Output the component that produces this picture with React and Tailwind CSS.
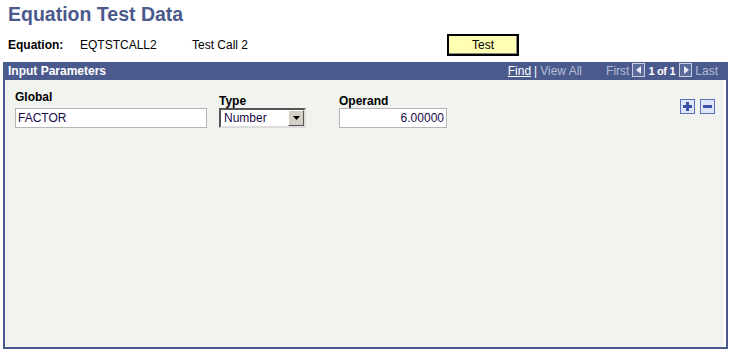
import React from "react";

function NavArrow({ dir }) {
  return (
    <span className="inline-flex h-[14px] w-[13px] items-center justify-center border border-[#c9cfe2] bg-[#5b6a9a]">
      <svg width="8" height="10" viewBox="0 0 8 10">
        {dir === "left" ? (
          <polygon points="6,1 6,9 1,5" fill="#e8ebf4" />
        ) : (
          <polygon points="2,1 2,9 7,5" fill="#e8ebf4" />
        )}
      </svg>
    </span>
  );
}

function RowButton({ kind }) {
  return (
    <button className="flex h-[15px] w-[15px] items-center justify-center border border-[#5b6fbf] bg-[#dfe6f8]">
      <svg width="11" height="11" viewBox="0 0 11 11">
        <rect x="1" y="4" width="9" height="3" fill="#3d50a8" />
        {kind === "add" && <rect x="4" y="1" width="3" height="9" fill="#3d50a8" />}
      </svg>
    </button>
  );
}

export default function App() {
  return (
    <div className="h-[353px] w-[731px] bg-white font-['Liberation_Sans',Arial,sans-serif] text-[12px] text-black">
      <div className="h-[28px] px-[8px] pt-[3px] text-[19.5px] font-bold leading-[22px] text-[#4b5a8c]">
        Equation Test Data
      </div>

      <div className="flex h-[28px] items-end pl-[8px]">
        <span className="w-[72px] pb-[2px] font-bold">Equation:</span>
        <span className="w-[112px] pb-[2px]">EQTSTCALL2</span>
        <span className="w-[255px] pb-[2px]">Test Call 2</span>
        <button className="h-[22px] w-[72px] border-2 border-black bg-[#ffffb4] text-[12px] leading-none shadow-[inset_-1px_-1px_0_#888]">
          Test
        </button>
      </div>

      <div className="mx-[3px] mt-[6px] flex h-[287px] flex-col border-2 border-t-0 border-[#4b5a8c] bg-[#f1f3ee]">
        <div className="flex h-[18px] items-center bg-[#4b5a8c] pl-[3px] pr-[8px] text-white">
          <span className="font-bold">Input Parameters</span>
          <div className="ml-auto flex items-center">
            <span className="underline">Find</span>
            <span className="mx-[3px]">|</span>
            <span className="text-[#b4bcd6]">View All</span>
            <span className="ml-[24px] text-[#b4bcd6]">First</span>
            <span className="ml-[3px]"><NavArrow dir="left" /></span>
            <span className="ml-[3px] text-[11px] font-bold tracking-[-0.3px]">1 of 1</span>
            <span className="ml-[4px]"><NavArrow dir="right" /></span>
            <span className="ml-[3px] text-[#b4bcd6]">Last</span>
          </div>
        </div>

        <div className="flex flex-1 border-r-2 border-white pl-[10px] pr-[9px] pt-[8px]">
          <div className="flex flex-col">
            <span className="h-[20px] font-bold">Global</span>
            <div className="flex h-[20px] w-[192px] items-center border border-[#b5b5b5] bg-white px-[2px] text-[#1a0a4a]">
              FACTOR
            </div>
          </div>
          <div className="ml-[12px] flex flex-col pt-[4px]">
            <span className="h-[16px] font-bold">Type</span>
            <div className="flex h-[20px] w-[87px] items-center border-2 border-t-[#555] border-l-[#555] border-b-[#ddd] border-r-[#ddd] bg-white pl-[3px] text-[#1a0a4a]">
              <span className="flex-1">Number</span>
              <span className="flex h-[16px] w-[16px] items-center justify-center border border-t-white border-l-white border-b-[#555] border-r-[#555] bg-[#d4d0c8]">
                <svg width="7" height="4" viewBox="0 0 7 4"><polygon points="0,0 7,0 3.5,4" fill="#000" /></svg>
              </span>
            </div>
          </div>
          <div className="ml-[33px] flex flex-col pt-[4px]">
            <span className="h-[16px] font-bold">Operand</span>
            <div className="flex h-[20px] w-[108px] items-center justify-end border border-[#b5b5b5] bg-white px-[2px] text-[#1a0a4a]">
              6.00000
            </div>
          </div>
          <div className="ml-auto flex gap-[5px] pt-[11px]">
            <RowButton kind="add" />
            <RowButton kind="remove" />
          </div>
        </div>
      </div>
    </div>
  );
}
